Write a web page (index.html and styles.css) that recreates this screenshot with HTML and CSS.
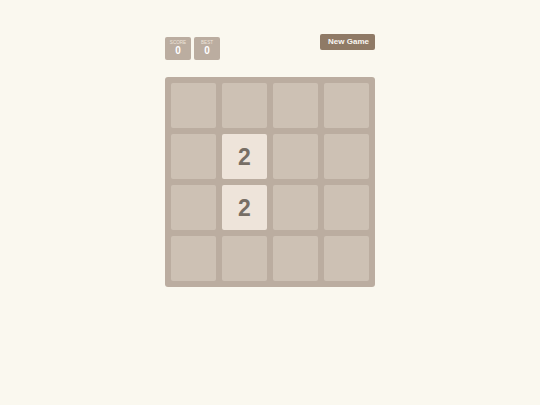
FILE: index.html
```html
<!DOCTYPE html>
<html>
<head>
<meta charset="utf-8">
<link rel="stylesheet" href="styles.css">
</head>
<body>
<div class="game">
  <div class="header">
    <div class="scores">
      <div class="score-box"><div class="label">SCORE</div><div class="value">0</div></div>
      <div class="score-box"><div class="label">BEST</div><div class="value">0</div></div>
    </div>
    <button class="new-game">New Game</button>
  </div>
  <div class="board">
    <div class="cell"></div><div class="cell"></div><div class="cell"></div><div class="cell"></div>
    <div class="cell"></div><div class="cell tile-2">2</div><div class="cell"></div><div class="cell"></div>
    <div class="cell"></div><div class="cell tile-2">2</div><div class="cell"></div><div class="cell"></div>
    <div class="cell"></div><div class="cell"></div><div class="cell"></div><div class="cell"></div>
  </div>
</div>
</body>
</html>
```
FILE: styles.css
```css
html, body {
  margin: 0;
  padding: 0;
  background: #faf8ef;
  font-family: "Liberation Sans", Arial, sans-serif;
}
.game {
  width: 210px;
  margin: 0 auto;
  padding-top: 34px;
}
.header {
  display: flex;
  justify-content: space-between;
  align-items: flex-start;
  height: 26px;
}
.scores {
  display: flex;
  gap: 3px;
  margin-top: 3px;
}
.score-box {
  width: 26px;
  height: 23px;
  background: #bbada0;
  border-radius: 2px;
  display: flex;
  flex-direction: column;
  align-items: center;
  box-sizing: border-box;
  padding-top: 3px;
}
.label {
  font-size: 4.6px;
  line-height: 5px;
  color: #eee4da;
}
.value {
  margin-top: 1px;
  font-size: 10px;
  line-height: 10px;
  font-weight: bold;
  color: #ffffff;
}
.new-game {
  width: 55px;
  height: 16px;
  padding: 0 0 1px 2px;
  border: none;
  border-radius: 2px;
  background: #8f7a66;
  color: #f9f6f2;
  font-family: "Liberation Sans", Arial, sans-serif;
  font-size: 8px;
  font-weight: bold;
  line-height: 15px;
}
.board {
  margin-top: 17px;
  width: 210px;
  height: 210px;
  box-sizing: border-box;
  padding: 6px;
  background: #bbada0;
  border-radius: 3px;
  display: grid;
  grid-template-columns: repeat(4, 45px);
  grid-template-rows: repeat(4, 45px);
  gap: 6px;
}
.cell {
  background: #cdc1b4;
  border-radius: 2px;
}
.tile-2 {
  background: #eee4da;
  color: #776e65;
  font-weight: bold;
  font-size: 23px;
  padding-top: 2px;
  box-sizing: border-box;
  display: flex;
  align-items: center;
  justify-content: center;
}
```
